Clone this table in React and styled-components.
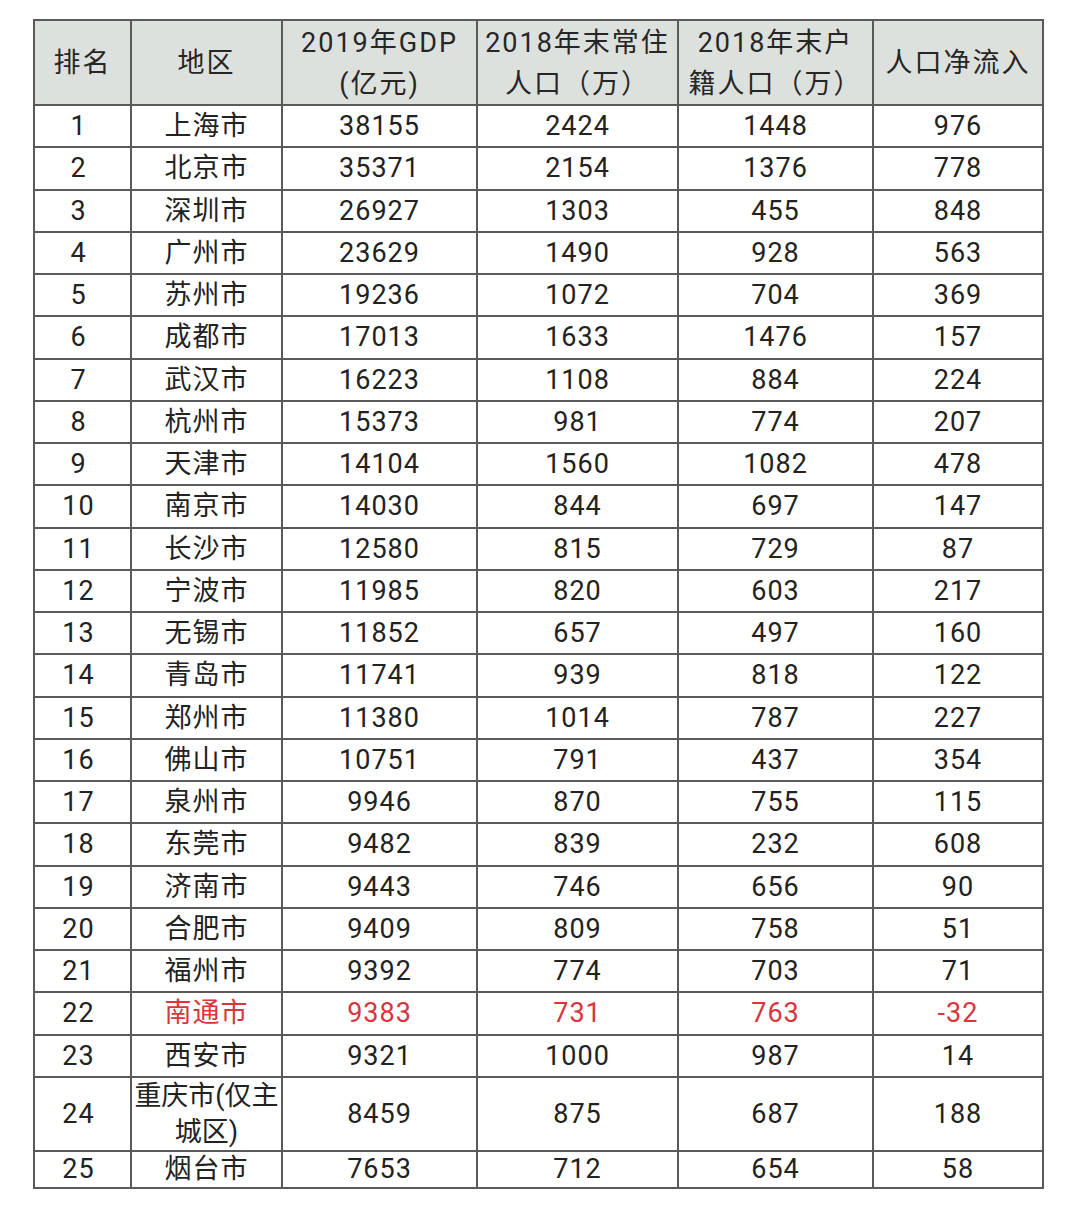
import React from "react";
import styled, { createGlobalStyle } from "styled-components";

const Global = createGlobalStyle`
  html, body { margin: 0; padding: 0; background: #ffffff; }
  body { font-family: Roboto, "Noto Sans CJK SC", sans-serif; }
`;

const Page = styled.div`
  padding: 19px 0 0 33px;
  width: 1080px;
  height: 1215px;
  box-sizing: border-box;
  background: #fff;
`;

const Table = styled.table`
  border-collapse: collapse;
  table-layout: fixed;
  width: 1009px;
  font-family: Roboto, "Noto Sans CJK SC", sans-serif;
  color: #222;
  border: 2px solid #5a5a5a;
`;

const HeadCell = styled.th`
  background: #dde1dd;
  border: 2px solid #5a5a5a;
  font-weight: 400;
  font-size: 27px;
  letter-spacing: 2px;
  line-height: 40.5px;
  padding: 2px 0 0 0;
  text-align: center;
  vertical-align: middle;
  height: 81px;
  color: #262626;
`;

const Row = styled.tr`
  height: ${(p) => p.$h}px;
`;

const Cell = styled.td`
  border: 2px solid #5a5a5a;
  font-size: 27px;
  letter-spacing: 1px;
  line-height: 34px;
  padding: ${(p) => (p.$first ? "0 8px 0 0" : "0")};
  text-align: center;
  vertical-align: middle;
  color: ${(p) => (p.$hl ? "#d8353d" : "#222")};
`;

const Wrap = styled.span`
  display: inline-block;
  letter-spacing: 0;
  line-height: 36px;
`;

const widths = [97, 151, 195, 201, 195, 170];

const rows = [
  ["1", "上海市", "38155", "2424", "1448", "976"],
  ["2", "北京市", "35371", "2154", "1376", "778"],
  ["3", "深圳市", "26927", "1303", "455", "848"],
  ["4", "广州市", "23629", "1490", "928", "563"],
  ["5", "苏州市", "19236", "1072", "704", "369"],
  ["6", "成都市", "17013", "1633", "1476", "157"],
  ["7", "武汉市", "16223", "1108", "884", "224"],
  ["8", "杭州市", "15373", "981", "774", "207"],
  ["9", "天津市", "14104", "1560", "1082", "478"],
  ["10", "南京市", "14030", "844", "697", "147"],
  ["11", "长沙市", "12580", "815", "729", "87"],
  ["12", "宁波市", "11985", "820", "603", "217"],
  ["13", "无锡市", "11852", "657", "497", "160"],
  ["14", "青岛市", "11741", "939", "818", "122"],
  ["15", "郑州市", "11380", "1014", "787", "227"],
  ["16", "佛山市", "10751", "791", "437", "354"],
  ["17", "泉州市", "9946", "870", "755", "115"],
  ["18", "东莞市", "9482", "839", "232", "608"],
  ["19", "济南市", "9443", "746", "656", "90"],
  ["20", "合肥市", "9409", "809", "758", "51"],
  ["21", "福州市", "9392", "774", "703", "71"],
  ["22", "南通市", "9383", "731", "763", "-32", true],
  ["23", "西安市", "9321", "1000", "987", "14"],
  ["24", "重庆市(仅主\n城区)", "8459", "875", "687", "188"],
  ["25", "烟台市", "7653", "712", "654", "58"],
];

const heights = (i) => {
  if (i === 23) return 70;
  if (i === 24) return 37;
  return 42.26;
};

export default function App() {
  return (
    <Page>
      <Global />
      <Table>
        <colgroup>
          {widths.map((w, i) => (
            <col key={i} style={{ width: w }} />
          ))}
        </colgroup>
        <thead>
          <tr>
            <HeadCell>排名</HeadCell>
            <HeadCell>地区</HeadCell>
            <HeadCell>
              2019年GDP
              <br />
              (亿元)
            </HeadCell>
            <HeadCell>
              2018年末常住
              <br />
              人口（万）
            </HeadCell>
            <HeadCell>
              2018年末户
              <br />
              籍人口（万）
            </HeadCell>
            <HeadCell>人口净流入</HeadCell>
          </tr>
        </thead>
        <tbody>
          {rows.map((r, i) => {
            const hl = r[6] === true;
            return (
              <Row key={i} $h={heights(i)}>
                <Cell $first>{r[0]}</Cell>
                <Cell $hl={hl}>
                  {r[1].includes("\n") ? (
                    <Wrap>
                      {r[1].split("\n")[0]}
                      <br />
                      {r[1].split("\n")[1]}
                    </Wrap>
                  ) : (
                    r[1]
                  )}
                </Cell>
                <Cell $hl={hl}>{r[2]}</Cell>
                <Cell $hl={hl}>{r[3]}</Cell>
                <Cell $hl={hl}>{r[4]}</Cell>
                <Cell $hl={hl}>{r[5]}</Cell>
              </Row>
            );
          })}
        </tbody>
      </Table>
    </Page>
  );
}
